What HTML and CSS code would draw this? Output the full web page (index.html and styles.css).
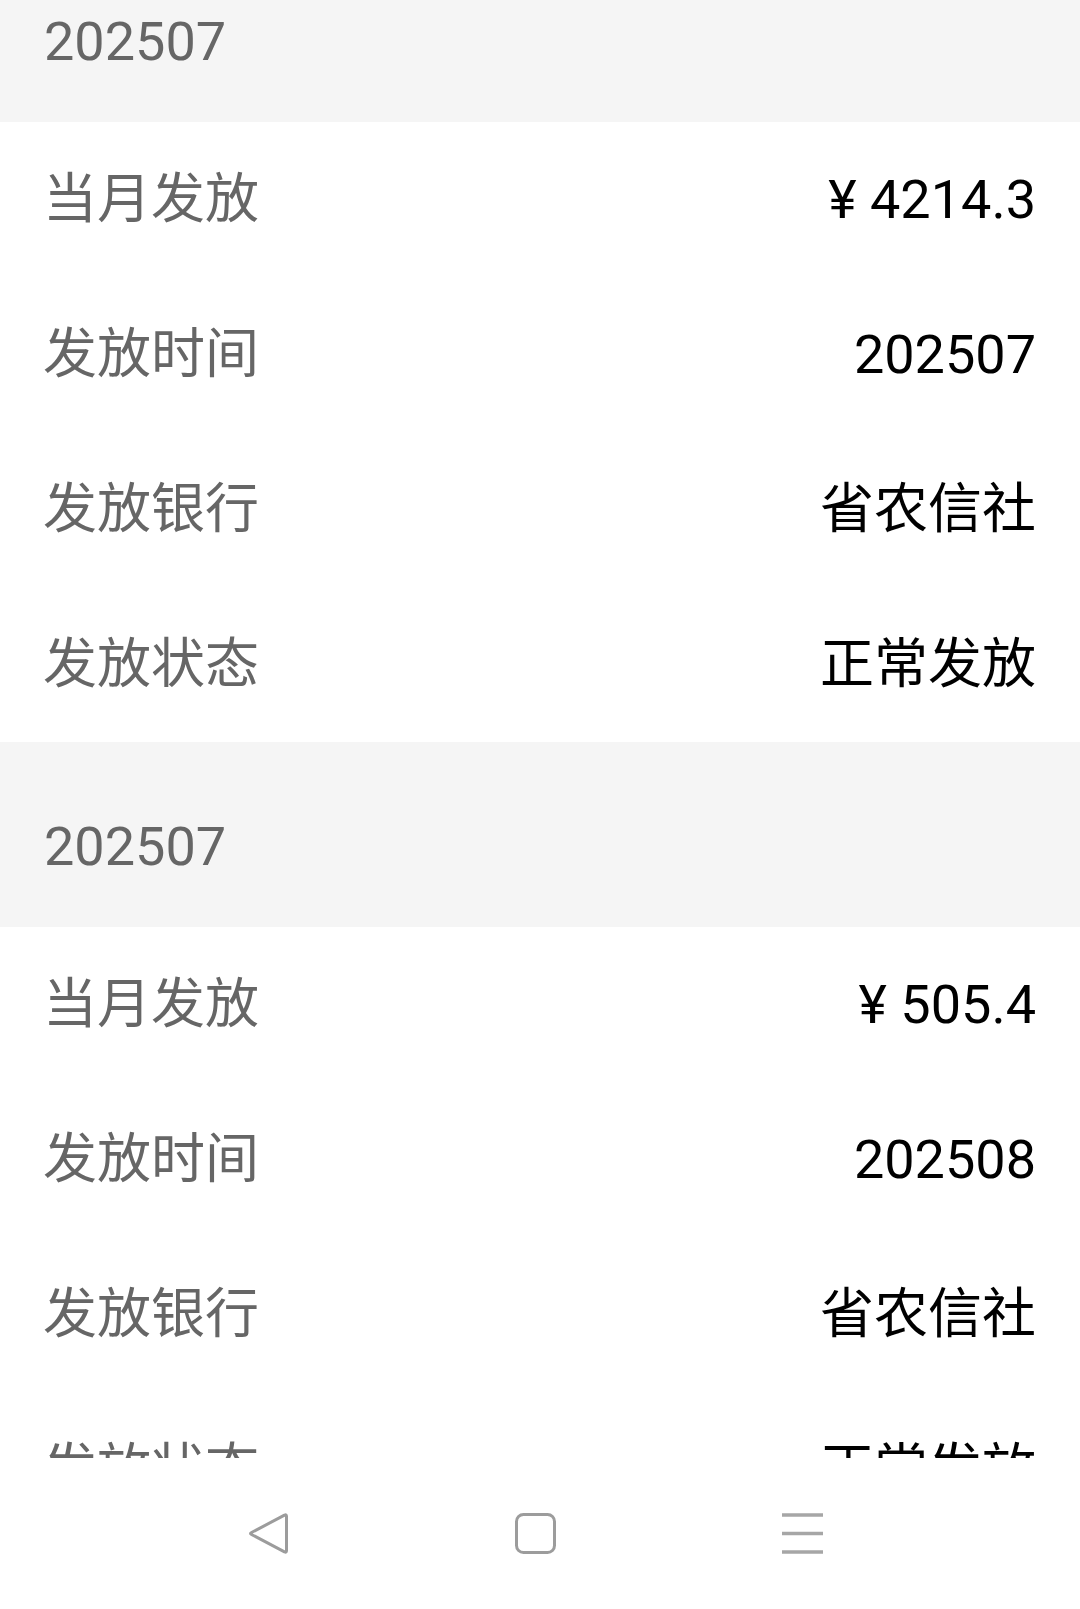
FILE: index.html
```html
<!DOCTYPE html>
<html lang="zh-CN">
<head>
<meta charset="utf-8">
<title>发放记录</title>
<link rel="stylesheet" href="styles.css">
</head>
<body>
<div class="screen">
  <div class="scroll">
    <div class="list">
      <section class="group">
        <div class="head">202507</div>
        <div class="row"><span class="label">当月发放</span><span class="value">¥ 4214.3</span></div>
        <div class="row"><span class="label">发放时间</span><span class="value">202507</span></div>
        <div class="row"><span class="label">发放银行</span><span class="value">省农信社</span></div>
        <div class="row"><span class="label">发放状态</span><span class="value">正常发放</span></div>
      </section>
      <section class="group">
        <div class="head">202507</div>
        <div class="row"><span class="label">当月发放</span><span class="value">¥ 505.4</span></div>
        <div class="row"><span class="label">发放时间</span><span class="value">202508</span></div>
        <div class="row"><span class="label">发放银行</span><span class="value">省农信社</span></div>
        <div class="row"><span class="label">发放状态</span><span class="value">正常发放</span></div>
      </section>
    </div>
  </div>
  <nav class="navbar">
    <svg class="nav-icon" viewBox="0 0 41 41" width="41" height="41">
      <path d="M38.5 3.5 L38.5 37.5 Q38.5 40 36.5 38.8 L3.5 21.5 Q1.5 20.5 3.5 19.5 L36.5 2.2 Q38.5 1 38.5 3.5 Z" fill="none" stroke="#9c9c9c" stroke-width="3" stroke-linejoin="round"/>
    </svg>
    <svg class="nav-icon" viewBox="0 0 41 41" width="41" height="41">
      <rect x="1.5" y="1.5" width="38" height="38" rx="7" ry="7" fill="none" stroke="#9c9c9c" stroke-width="3"/>
    </svg>
    <svg class="nav-icon" viewBox="0 0 41 41" width="41" height="41">
      <g stroke="#a6a6a6" stroke-width="3.5">
        <line x1="0" y1="2" x2="41" y2="2"/>
        <line x1="0" y1="20.5" x2="41" y2="20.5"/>
        <line x1="0" y1="39" x2="41" y2="39"/>
      </g>
    </svg>
  </nav>
</div>
</body>
</html>
```

FILE: styles.css
```css
html, body {
  margin: 0;
  padding: 0;
  background: #ffffff;
}

.screen {
  width: 1080px;
  height: 1609px;
  display: flex;
  flex-direction: column;
  overflow: hidden;
  font-family: Roboto, "Noto Sans CJK SC", "Noto Sans", sans-serif;
  font-size: 54px;
}

.scroll {
  flex: 1;
  overflow: hidden;
  background: #ffffff;
}

.list {
  margin-top: -63px;
}

.head {
  box-sizing: border-box;
  height: 185px;
  padding: 24px 43px 0 44px;
  display: flex;
  align-items: center;
  background: #f5f5f5;
  color: #666666;
  line-height: 1;
}

.row {
  box-sizing: border-box;
  height: 155px;
  padding: 0 44px 0 43px;
  display: flex;
  align-items: center;
  justify-content: space-between;
  line-height: 1;
}

.label {
  color: #666666;
}

.value {
  color: #000000;
}

.navbar {
  flex: 0 0 151px;
  display: flex;
  align-items: center;
  padding-left: 248px;
  gap: 226px;
  background: #ffffff;
}

.nav-icon {
  display: block;
}
```
